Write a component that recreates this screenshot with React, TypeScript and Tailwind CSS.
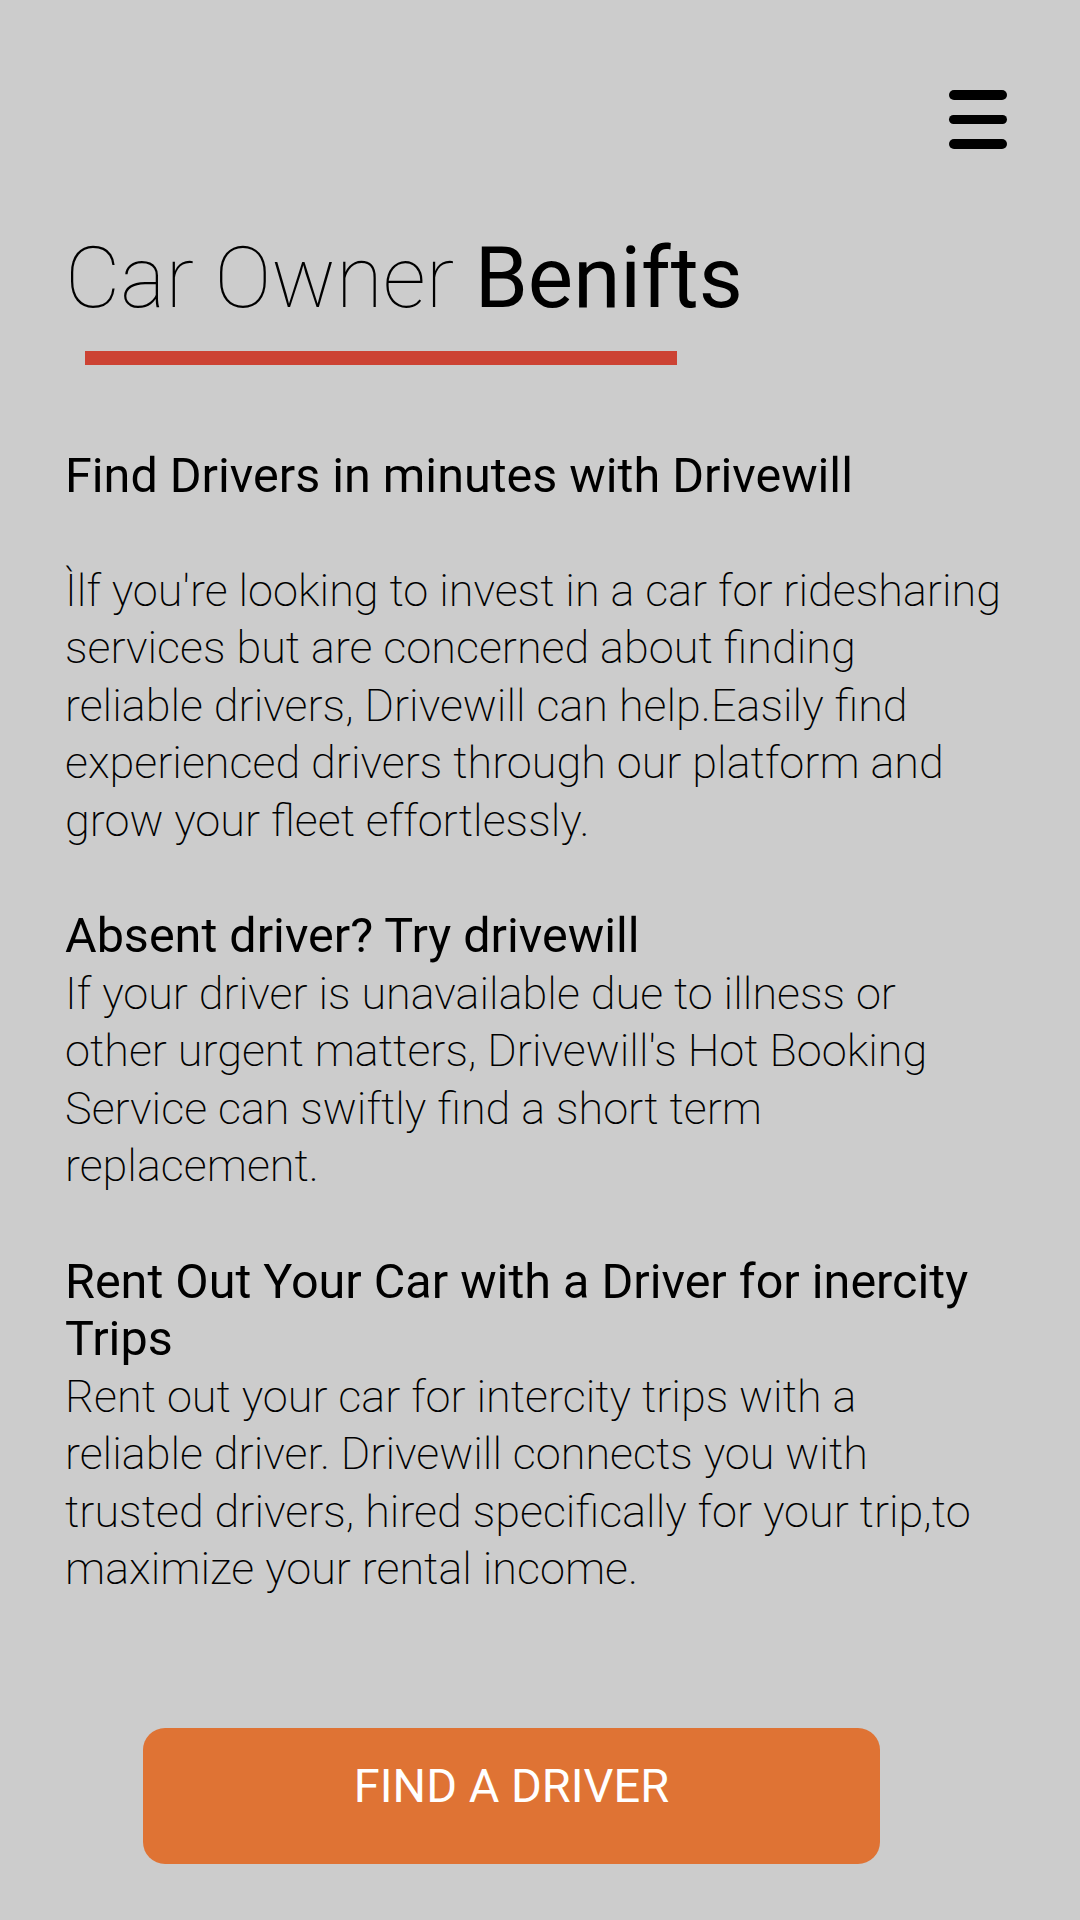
const sections = [
  {
    title: ['Find Drivers in minutes with Drivewill'],
    gap: true,
    body: [
      "Ìlf you're looking to invest in a car for ridesharing",
      'services but are concerned about finding',
      'reliable drivers, Drivewill can help.Easily find',
      'experienced drivers through our platform and',
      'grow your fleet effortlessly.',
    ],
  },
  {
    title: ['Absent driver? Try drivewill'],
    gap: false,
    body: [
      'If your driver is unavailable due to illness or',
      "other urgent matters, Drivewill's Hot Booking",
      'Service can swiftly find a short term',
      'replacement.',
    ],
  },
  {
    title: ['Rent Out Your Car with a Driver for inercity', 'Trips'],
    gap: false,
    body: [
      'Rent out your car for intercity trips with a',
      'reliable driver. Drivewill connects you with',
      'trusted drivers, hired specifically for your trip,to',
      'maximize your rental income.',
    ],
  },
];

function Lines({ lines }: { lines: string[] }) {
  return (
    <>
      {lines.map((l, i) => (
        <span key={i} className="block whitespace-nowrap">
          {l}
        </span>
      ))}
    </>
  );
}

export default function App() {
  return (
    <div className="min-h-[1920px] w-[1080px] bg-[#cccccc] text-black font-['Roboto',sans-serif]">
      {/* Header */}
      <header className="flex justify-end pt-[90px] pr-[73px]">
        <button aria-label="Menu" className="flex w-[58px] flex-col gap-[15px]">
          <span className="block h-[9.5px] w-full rounded-full bg-black" />
          <span className="block h-[9.5px] w-full rounded-full bg-black" />
          <span className="block h-[9.5px] w-full rounded-full bg-black" />
        </button>
      </header>

      <main className="px-[65px]">
        <h1 className="mt-[87px] text-[85.4px] leading-none">
          <span className="font-thin">Car Owner </span>
          <span className="font-normal">Benifts</span>
        </h1>
        <div className="mt-[30px] ml-[20px] h-[14px] w-[592px] bg-[#cc4233]" />

        <div className="mt-[82px] flex flex-col gap-[58px]">
          {sections.map((s) => (
            <section key={s.title[0]} className="flex flex-col">
              <h3 className="text-[48.5px] font-normal leading-[57.5px]">
                <Lines lines={s.title} />
              </h3>
              <p className={`text-[45px] font-extralight leading-[57.5px] ${s.gap ? 'mt-[57.5px]' : ''}`}>
                <Lines lines={s.body} />
              </p>
            </section>
          ))}
        </div>

        <button className="mt-[130px] ml-[78px] flex h-[136px] w-[737px] items-start justify-center rounded-[22px] bg-[#df7334] pt-[23px] text-[47px] font-normal text-white">
          FIND A DRIVER
        </button>
      </main>
    </div>
  );
}
